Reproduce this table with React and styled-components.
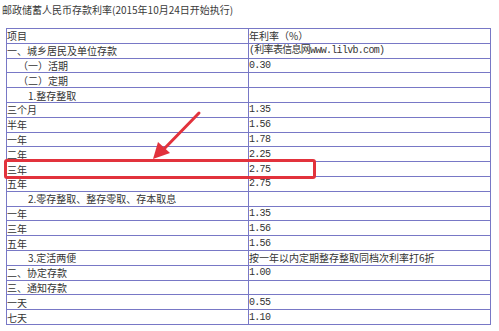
import styled, { createGlobalStyle } from "styled-components";

const GlobalStyle = createGlobalStyle`
  html, body {
    margin: 0;
    padding: 0;
    background: #fff;
  }
  body {
    font-family: "Noto Sans CJK SC", "Liberation Sans", sans-serif;
  }
`;

const Page = styled.div`
  width: 499px;
  height: 331px;
  overflow: hidden;
  position: relative;
  background: #fff;
`;

const Title = styled.div`
  padding: 3px 0 0 2px;
  height: 21px;
  font-size: 10px;
  line-height: 14px;
  color: #3a3a3a;
  font-family: "Noto Sans CJK SC", sans-serif;
`;

const TableWrap = styled.div`
  padding: 4px 0 0 6px;
  position: relative;
`;

const RateTable = styled.table`
  border-collapse: collapse;
  width: 485px;
  table-layout: fixed;
`;

const Cell = styled.td`
  border: 1px solid #7878c6;
  height: 13.8px;
  padding: 0 0 0 ${(p) => p.$indent || 0}px;
  font-size: 10px;
  line-height: 13px;
  color: #333;
  white-space: nowrap;
  overflow: hidden;
  vertical-align: middle;
  font-family: ${(p) =>
    p.$mono
      ? `"Liberation Mono", "Noto Sans CJK SC", monospace`
      : `"Noto Sans CJK SC", "Liberation Sans", sans-serif`};
  letter-spacing: ${(p) => (p.$mono ? "-0.7px" : "0")};
`;

const Highlight = styled.div`
  position: absolute;
  left: 4px;
  top: 135px;
  width: 306px;
  height: 14px;
  border: 3px solid #e2323c;
  border-radius: 3px;
  pointer-events: none;
`;

const Arrow = styled.svg`
  position: absolute;
  left: 147px;
  top: 86px;
  pointer-events: none;
`;

const rows = [
  ["项目", "年利率（%）", 0],
  ["一、城乡居民及单位存款", "(利率表信息网www.lilvb.com)", 0],
  ["（一）活期", "0.30", 11],
  ["（二）定期", "", 11],
  ["1.整存整取", "", 21],
  ["三个月", "1.35", 0],
  ["半年", "1.56", 0],
  ["一年", "1.78", 0],
  ["二年", "2.25", 0],
  ["三年", "2.75", 0],
  ["五年", "2.75", 0],
  ["2.零存整取、整存零取、存本取息", "", 21],
  ["一年", "1.35", 0],
  ["三年", "1.56", 0],
  ["五年", "1.56", 0],
  ["3.定活两便", "按一年以内定期整存整取同档次利率打6折", 21],
  ["二、协定存款", "1.00", 0],
  ["三、通知存款", "", 0],
  ["一天", "0.55", 0],
  ["七天", "1.10", 0],
];

export default function App() {
  return (
    <Page>
      <GlobalStyle />
      <Title>邮政储蓄人民币存款利率(2015年10月24日开始执行)</Title>
      <TableWrap>
        <RateTable>
          <tbody>
            {rows.map(([name, rate, indent], i) => (
              <tr key={i}>
                <Cell $indent={indent}>{name}</Cell>
                <Cell $mono={/^[\d(]/.test(rate)}>{rate}</Cell>
              </tr>
            ))}
          </tbody>
        </RateTable>
        <Highlight />
        <Arrow width="60" height="52" viewBox="0 0 60 52">
          <line x1="52" y1="3" x2="16" y2="40" stroke="#e2323c" strokeWidth="3" strokeLinecap="round" />
          <polygon points="6,49 11,32 23,43" fill="#e2323c" />
        </Arrow>
      </TableWrap>
    </Page>
  );
}
